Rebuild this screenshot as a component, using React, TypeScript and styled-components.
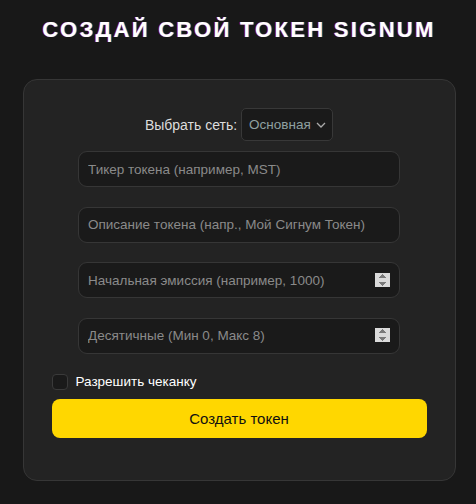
import { createGlobalStyle } from "styled-components";
import styled from "styled-components";

const GlobalStyle = createGlobalStyle`
  html, body {
    margin: 0;
    background: #181818;
    font-family: "Liberation Sans", Arial, sans-serif;
  }
`;

const Page = styled.div`
  display: flex;
  flex-direction: column;
  align-items: center;
  width: 476px;
  height: 504px;
  box-sizing: border-box;
  padding: 16px 0 0 2px;
`;

const Title = styled.h1`
  margin: 0;
  color: #fff;
  font-size: 22px;
  font-weight: 700;
  letter-spacing: 2.3px;
  line-height: 28px;
  text-shadow: -1px 0 0 rgba(255, 0, 80, 0.55), 1px 0 0 rgba(0, 150, 255, 0.55);
`;

const Card = styled.form`
  margin-top: 35px;
  width: 433px;
  box-sizing: border-box;
  background: #232323;
  border: 1px solid #363636;
  border-radius: 14px;
  padding: 28px 28px 42px;
  display: flex;
  flex-direction: column;
  align-items: center;
`;

const NetworkRow = styled.div`
  display: flex;
  align-items: center;
  gap: 4px;
  color: #ddd;
  font-size: 14px;
`;

const Select = styled.select`
  appearance: none;
  width: 92px;
  height: 33px;
  background: #1a1a1a
    url("data:image/svg+xml,%3Csvg xmlns='http://www.w3.org/2000/svg' width='10' height='6'%3E%3Cpath d='M1 1l4 4 4-4' fill='none' stroke='%23aaa' stroke-width='1.3'/%3E%3C/svg%3E")
    no-repeat right 6px center;
  border: 1px solid #383838;
  border-radius: 5px;
  color: #8fa0a0;
  font-family: inherit;
  font-size: 13.5px;
  padding: 0 14px 0 7px;
`;

const Fields = styled.div`
  display: flex;
  flex-direction: column;
  gap: 19.5px;
  margin-top: 10px;
  width: 322px;
`;

const Input = styled.input`
  height: 36px;
  box-sizing: border-box;
  width: 100%;
  background: #1a1a1a;
  border: 1px solid #363636;
  border-radius: 9px;
  color: #ddd;
  font-family: inherit;
  font-size: 13.5px;
  padding: 0 9px;
  outline: none;

  &::placeholder {
    color: #8a8a8a;
  }

  &::-webkit-inner-spin-button {
    opacity: 0.85;
  }
`;

const CheckRow = styled.label`
  align-self: flex-start;
  display: flex;
  align-items: center;
  gap: 8px;
  margin-top: 20px;
  color: #fff;
  font-size: 13.5px;
`;

const Box = styled.input`
  appearance: none;
  margin: 0;
  width: 16px;
  height: 16px;
  background: #1a1a1a;
  border: 1px solid #3a3a3a;
  border-radius: 4px;
`;

const Submit = styled.button`
  margin-top: 9px;
  width: 100%;
  height: 39px;
  background: #ffd700;
  border: none;
  border-radius: 8px;
  color: #111;
  font-family: inherit;
  font-size: 15px;
  cursor: pointer;
`;

export default function App() {
  return (
    <>
      <GlobalStyle />
      <Page>
        <Title>СОЗДАЙ СВОЙ ТОКЕН SIGNUM</Title>
        <Card onSubmit={(e) => e.preventDefault()}>
          <NetworkRow>
            <span>Выбрать сеть:</span>
            <Select defaultValue="main">
              <option value="main">Основная</option>
              <option value="test">Тестовая</option>
            </Select>
          </NetworkRow>
          <Fields>
            <Input type="text" placeholder="Тикер токена (например, MST)" />
            <Input type="text" placeholder="Описание токена (напр., Мой Сигнум Токен)" />
            <Input type="number" placeholder="Начальная эмиссия (например, 1000)" />
            <Input type="number" placeholder="Десятичные (Мин 0, Макс 8)" />
          </Fields>
          <CheckRow>
            <Box type="checkbox" />
            Разрешить чеканку
          </CheckRow>
          <Submit type="submit">Создать токен</Submit>
        </Card>
      </Page>
    </>
  );
}
